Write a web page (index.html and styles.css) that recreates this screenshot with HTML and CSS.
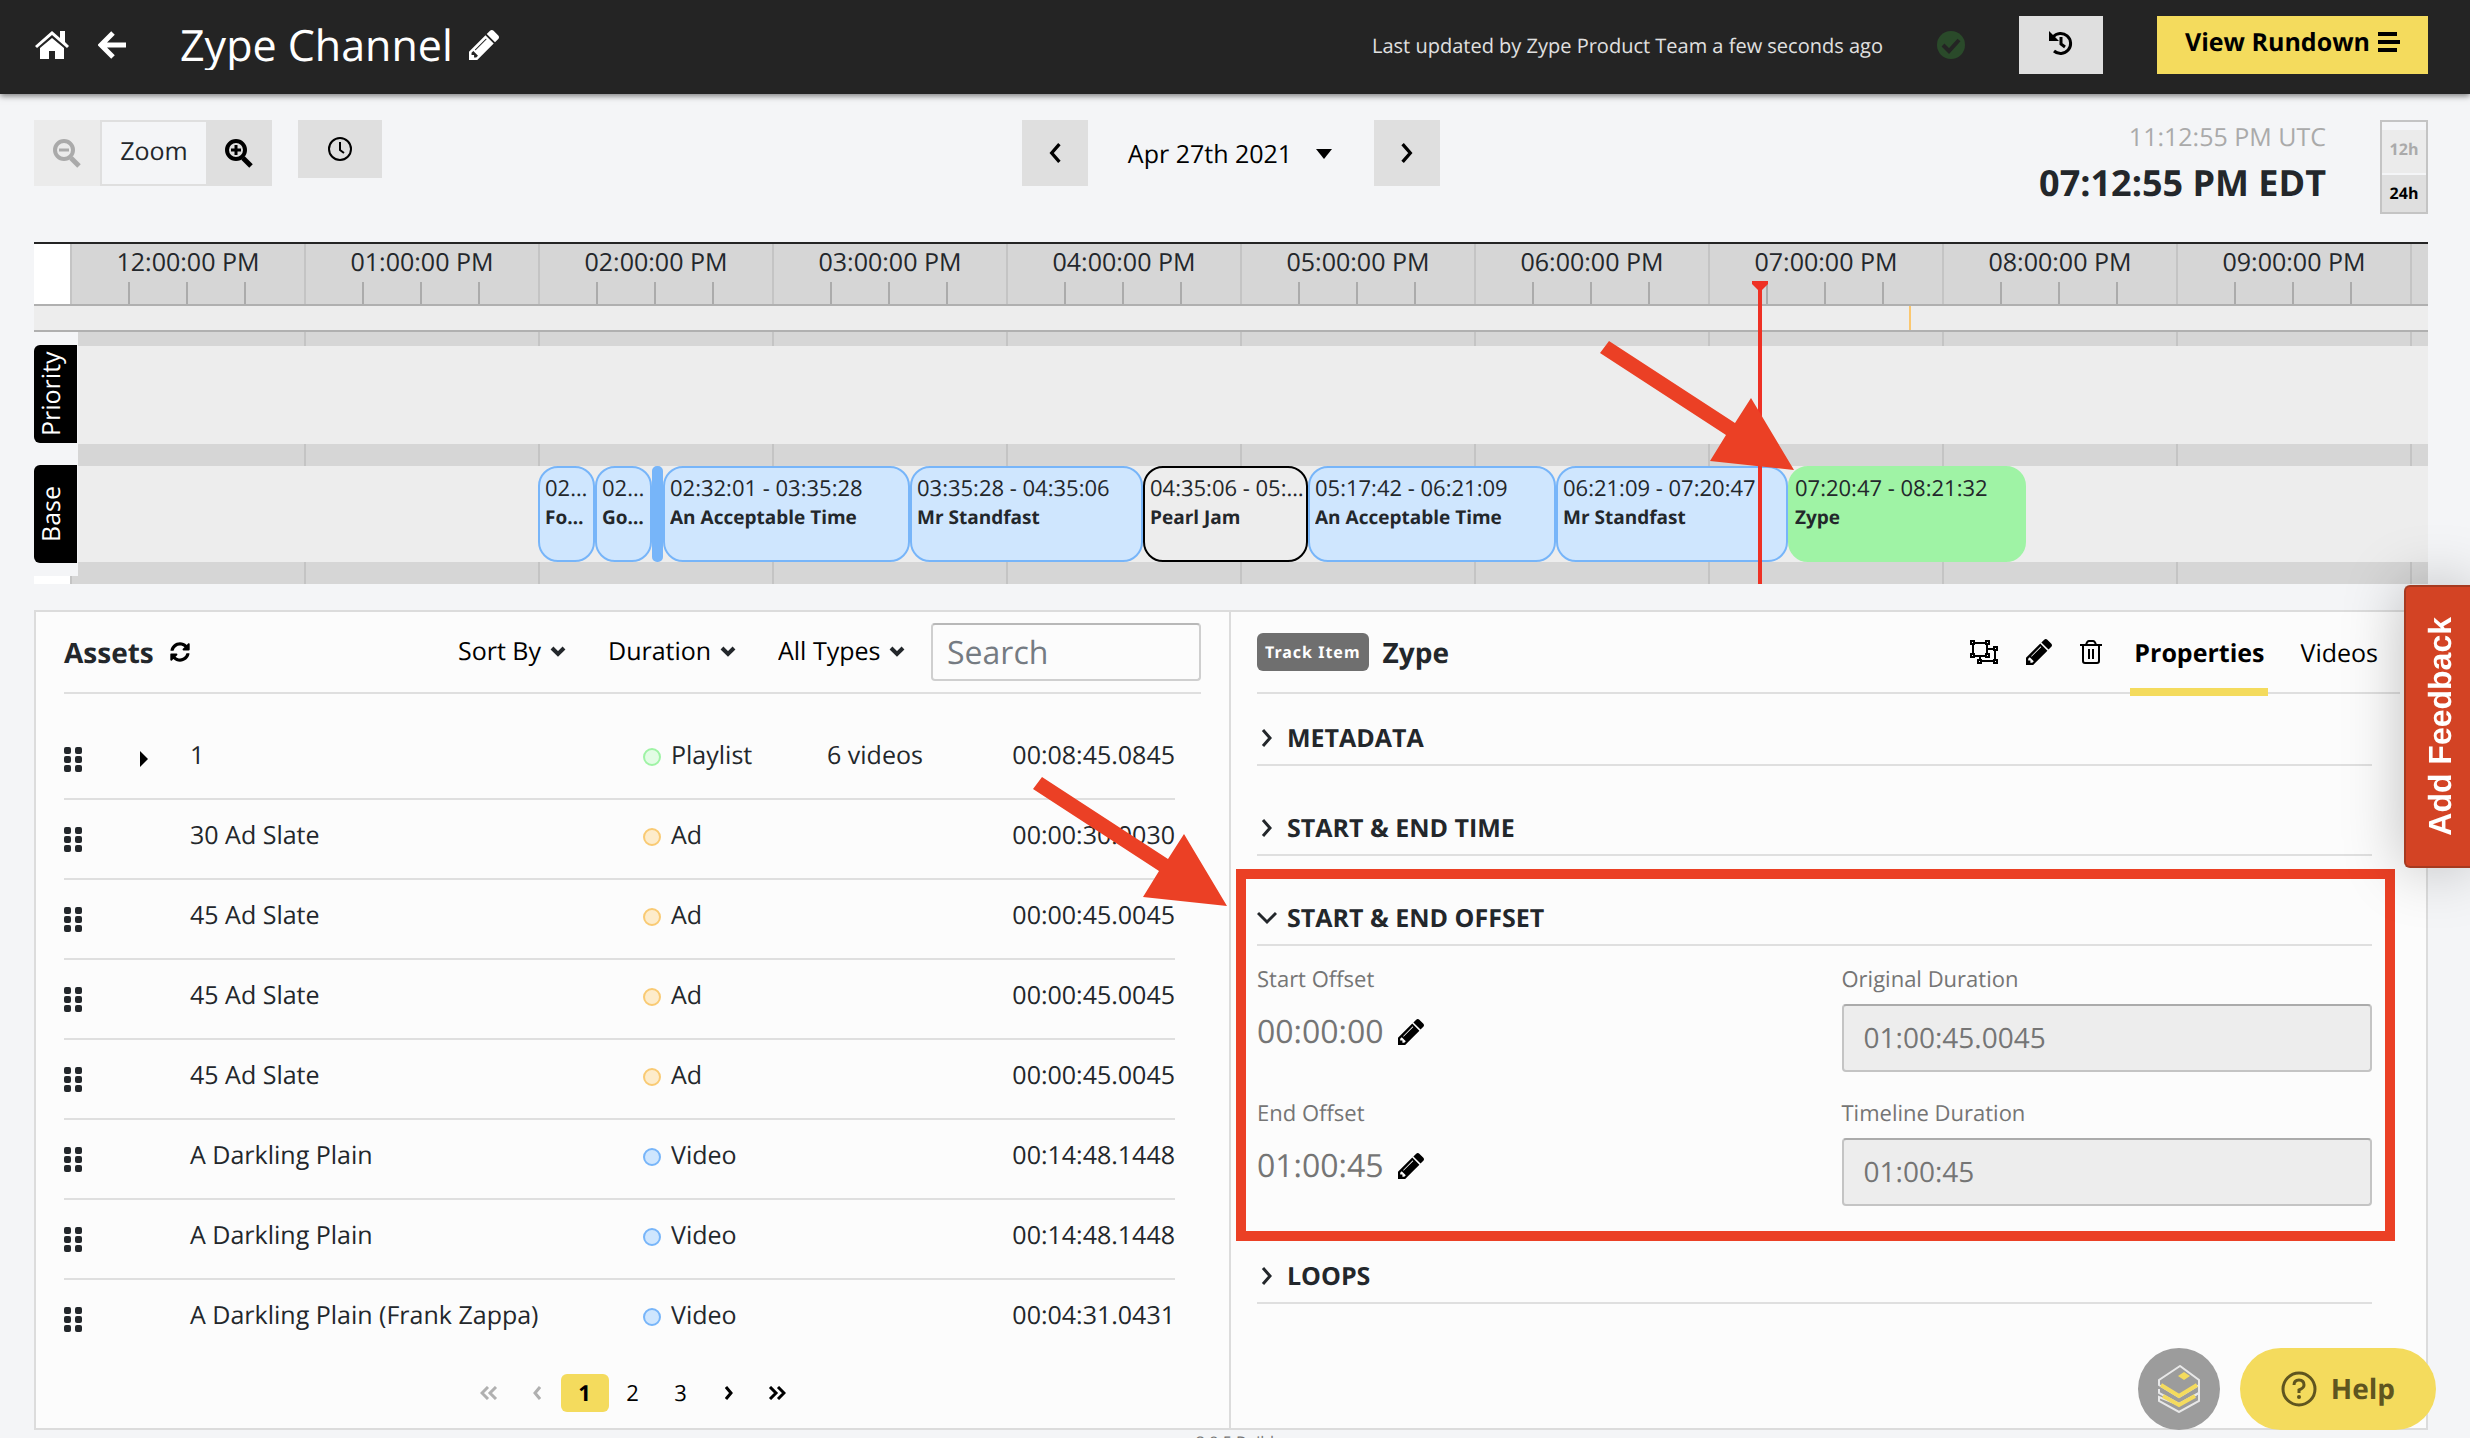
FILE: index.html
```html
<!DOCTYPE html>
<html lang="en">
<head>
  <meta charset="UTF-8">
  <meta name="viewport" content="width=device-width, initial-scale=1.0">
  <title>Zype Channel</title>
  <link rel="stylesheet" href="styles.css">
</head>
<body>

  <!-- shared icons -->
  <svg class="sprite" width="0" height="0" aria-hidden="true">
    <symbol id="pencil" viewBox="128 149 1515 1515">
      <path d="M491 1536l91-91-235-235-91 91v107h128v128h107zm523-928q0-22-22-22-10 0-17 7l-542 542q-7 7-7 17 0 22 22 22 10 0 17-7l542-542q7-7 7-17zm-54-192l416 416-832 832h-416v-416zm683 96q0 53-37 90l-166 166-416-416 166-165q36-38 90-38 53 0 91 38l235 234q37 39 37 91z"/>
    </symbol>
    <symbol id="chevron" viewBox="0 0 16 12">
      <path d="M2 3l6 6 6-6" fill="none" stroke="currentColor" stroke-width="4"/>
    </symbol>
    <symbol id="angle" viewBox="0 0 12 20">
      <path d="M2 2l7 8-7 8" fill="none" stroke="currentColor" stroke-width="3"/>
    </symbol>
    <symbol id="grip" viewBox="0 0 18 25">
      <rect x="0" y="0" width="7" height="7" rx="2"/><rect x="11" y="0" width="7" height="7" rx="2"/>
      <rect x="0" y="9" width="7" height="7" rx="2"/><rect x="11" y="9" width="7" height="7" rx="2"/>
      <rect x="0" y="18" width="7" height="7" rx="2"/><rect x="11" y="18" width="7" height="7" rx="2"/>
    </symbol>
    <symbol id="arrow" viewBox="0 0 194 130">
      <path d="M9 0L135 82L151 57L194 129L110 120L126 94L0 12Z"/>
    </symbol>
  </svg>

  <header class="topbar">
    <a class="topbar-link" href="#" aria-label="Home">
      <svg width="36" height="30" viewBox="0 0 36 30"><path d="M18 1L1 16l2 2L18 5l15 13 2-2-4-4V1h-5v7z"/><path d="M18 8L6 18v11h9v-8h6v8h9V18z"/></svg>
    </a>
    <a class="topbar-link back" href="#" aria-label="Back">
      <svg class="line" width="28" height="28" viewBox="0 0 28 28"><path d="M15 2L3 14l12 12M3 14h25" stroke-width="5"/></svg>
    </a>
    <h1 class="title">Zype Channel</h1>
    <button class="icon-btn edit-title" aria-label="Rename channel"><svg width="30" height="30"><use href="#pencil"/></svg></button>
    <p class="updated">Last updated by Zype Product Team a few seconds ago</p>
    <svg class="saved" width="28" height="28" viewBox="0 0 28 28"><circle cx="14" cy="14" r="14"/><path d="M6 14l6 6L22 9" fill="none" stroke="#242424" stroke-width="4"/></svg>
    <button class="btn history" aria-label="History">
      <svg class="line" width="24" height="26" viewBox="0 0 24 26" stroke-width="3"><path d="M4 7a10 10 0 1 1 1 14"/><path d="M12 7v7l4 3"/><path d="M0 1v10h10z" fill="currentColor" stroke="none"/></svg>
    </button>
    <button class="btn rundown">View Rundown
      <svg width="22" height="20" viewBox="0 0 22 20"><path d="M0 2h19M0 10h22M0 18h19" stroke="currentColor" stroke-width="4"/></svg>
    </button>
  </header>

  <div class="toolbar">
    <div class="toolbar-left">
      <div class="zoom">
        <button class="btn zoom-btn" disabled aria-label="Zoom out">
          <svg class="line" width="28" height="30" viewBox="0 0 28 30"><circle cx="11" cy="12" r="9" stroke-width="4"/><path d="M18 20l8 8" stroke-width="5"/><path d="M6 12h10" stroke-width="3"/></svg>
        </button>
        <span class="zoom-label">Zoom</span>
        <button class="btn zoom-btn" aria-label="Zoom in">
          <svg class="line" width="28" height="30" viewBox="0 0 28 30"><circle cx="11" cy="12" r="9" stroke-width="4"/><path d="M18 20l8 8" stroke-width="5"/><path d="M6 12h10M11 7v10" stroke-width="3"/></svg>
        </button>
      </div>
      <button class="btn now" aria-label="Go to current time">
        <svg class="line" width="24" height="24" viewBox="0 0 24 24" stroke-width="2"><circle cx="12" cy="12" r="11"/><path d="M12 5v8l4 3"/></svg>
      </button>
    </div>

    <div class="date-nav">
      <button class="btn day-btn" aria-label="Previous day"><svg class="flip" width="14" height="22"><use href="#angle"/></svg></button>
      <button class="date">Apr 27th 2021 <svg width="16" height="10" viewBox="0 0 16 10"><path d="M0 0h16L8 10z"/></svg></button>
      <button class="btn day-btn" aria-label="Next day"><svg width="14" height="22"><use href="#angle"/></svg></button>
    </div>

    <div class="toolbar-right">
      <div class="clocks">
        <div class="utc">11:12:55 PM UTC</div>
        <div class="local">07:12:55 PM EDT</div>
      </div>
      <div class="hour-format">
        <button disabled>12h</button>
        <button>24h</button>
      </div>
    </div>
  </div>

  <section class="timeline">
    <div class="ruler">
      <div class="corner"></div>
      <div class="hour"><span>12:00:00 PM</span><i></i></div>
      <div class="hour"><span>01:00:00 PM</span><i></i></div>
      <div class="hour"><span>02:00:00 PM</span><i></i></div>
      <div class="hour"><span>03:00:00 PM</span><i></i></div>
      <div class="hour"><span>04:00:00 PM</span><i></i></div>
      <div class="hour"><span>05:00:00 PM</span><i></i></div>
      <div class="hour"><span>06:00:00 PM</span><i></i></div>
      <div class="hour"><span>07:00:00 PM</span><i></i></div>
      <div class="hour"><span>08:00:00 PM</span><i></i></div>
      <div class="hour"><span>09:00:00 PM</span><i></i></div>
      <div class="hour"></div>
    </div>
    <div class="ad-bar"><span class="ad-marker" style="left: 1875px"></span></div>
    <div class="tracks">
      <div class="track-labels">
        <div class="track-label">Priority</div>
        <div class="track-label">Base</div>
      </div>
      <div class="lanes">
        <div class="lane"></div>
        <div class="lane base">
          <div class="item" style="width: 57px"><span>02:00:00 - 02:14:20</span><b>Foundation</b></div>
          <div class="item" style="width: 57px"><span>02:14:20 - 02:29:10</span><b>Good Times</b></div>
          <div class="item sliver" style="width: 11px"></div>
          <div class="item" style="width: 247px"><span>02:32:01 - 03:35:28</span><b>An Acceptable Time</b></div>
          <div class="item" style="width: 233px"><span>03:35:28 - 04:35:06</span><b>Mr Standfast</b></div>
          <div class="item outlined" style="width: 165px"><span>04:35:06 - 05:17:42</span><b>Pearl Jam</b></div>
          <div class="item" style="width: 248px"><span>05:17:42 - 06:21:09</span><b>An Acceptable Time</b></div>
          <div class="item" style="width: 232px"><span>06:21:09 - 07:20:47</span><b>Mr Standfast</b></div>
          <div class="item selected" style="width: 238px"><span>07:20:47 - 08:21:32</span><b>Zype</b></div>
        </div>
      </div>
    </div>
    <div class="playhead" style="left: 1718px"></div>
    <svg class="arrow arrow-item" width="194" height="130"><use href="#arrow"/></svg>
  </section>

  <main class="panels">
    <section class="assets">
      <div class="panel-head">
        <h2>Assets</h2>
        <button class="icon-btn refresh" aria-label="Refresh">
          <svg width="20" height="20" viewBox="0 0 512 512"><path d="M370.72 133.28C339.458 104.008 298.888 87.962 255.848 88c-77.458.068-144.328 53.178-162.791 126.85-1.344 5.363-6.122 9.15-11.651 9.15H24.103c-7.498 0-13.194-6.807-11.807-14.176C33.933 94.924 134.813 8 256 8c66.448 0 126.791 26.136 171.315 68.685L463.03 40.97C478.149 25.851 504 36.559 504 57.941V192c0 13.255-10.745 24-24 24H345.941c-21.382 0-32.09-25.851-16.971-40.971l41.75-41.749zM32 296h134.059c21.382 0 32.09 25.851 16.971 40.971l-41.75 41.75c31.262 29.273 71.835 45.319 114.876 45.28 77.418-.07 144.315-53.144 162.787-126.849 1.344-5.363 6.122-9.15 11.651-9.15h57.304c7.498 0 13.194 6.807 11.807 14.176C478.067 417.076 377.187 504 256 504c-66.448 0-126.791-26.136-171.315-68.685L48.97 471.03C33.851 486.149 8 475.441 8 454.059V320c0-13.255 10.745-24 24-24z"/></svg>
        </button>
        <div class="filters">
          <label class="filter"><select aria-label="Sort by"><option>Sort By</option></select><svg width="16" height="12"><use href="#chevron"/></svg></label>
          <label class="filter"><select aria-label="Duration"><option>Duration</option></select><svg width="16" height="12"><use href="#chevron"/></svg></label>
          <label class="filter"><select aria-label="Type"><option>All Types</option></select><svg width="16" height="12"><use href="#chevron"/></svg></label>
        </div>
        <input class="search" type="text" placeholder="Search" aria-label="Search assets">
      </div>

      <table class="asset-table">
        <colgroup><col class="c-grip"><col class="c-caret"><col><col class="c-type"><col class="c-count"><col class="c-dur"></colgroup>
        <tr><td class="ic"><svg width="18" height="25"><use href="#grip"/></svg></td><td class="ic caret"><svg width="8" height="16" viewBox="0 0 8 16"><path d="M0 0l8 8-8 8z"/></svg></td><td>1</td><td><span class="dot playlist"></span>Playlist</td><td>6 videos</td><td class="dur">00:08:45.0845</td></tr>
        <tr><td class="ic"><svg width="18" height="25"><use href="#grip"/></svg></td><td></td><td>30 Ad Slate</td><td><span class="dot ad"></span>Ad</td><td></td><td class="dur">00:00:30.0030</td></tr>
        <tr><td class="ic"><svg width="18" height="25"><use href="#grip"/></svg></td><td></td><td>45 Ad Slate</td><td><span class="dot ad"></span>Ad</td><td></td><td class="dur">00:00:45.0045</td></tr>
        <tr><td class="ic"><svg width="18" height="25"><use href="#grip"/></svg></td><td></td><td>45 Ad Slate</td><td><span class="dot ad"></span>Ad</td><td></td><td class="dur">00:00:45.0045</td></tr>
        <tr><td class="ic"><svg width="18" height="25"><use href="#grip"/></svg></td><td></td><td>45 Ad Slate</td><td><span class="dot ad"></span>Ad</td><td></td><td class="dur">00:00:45.0045</td></tr>
        <tr><td class="ic"><svg width="18" height="25"><use href="#grip"/></svg></td><td></td><td>A Darkling Plain</td><td><span class="dot video"></span>Video</td><td></td><td class="dur">00:14:48.1448</td></tr>
        <tr><td class="ic"><svg width="18" height="25"><use href="#grip"/></svg></td><td></td><td>A Darkling Plain</td><td><span class="dot video"></span>Video</td><td></td><td class="dur">00:14:48.1448</td></tr>
        <tr><td class="ic"><svg width="18" height="25"><use href="#grip"/></svg></td><td></td><td>A Darkling Plain (Frank Zappa)</td><td><span class="dot video"></span>Video</td><td></td><td class="dur">00:04:31.0431</td></tr>
      </table>

      <nav class="pagination" aria-label="Pages">
        <button disabled aria-label="First"><svg class="line" width="18" height="14" viewBox="0 0 18 14"><path d="M8 1L2 7l6 6M16 1l-6 6 6 6"/></svg></button>
        <button disabled aria-label="Previous"><svg class="line" width="8" height="14" viewBox="0 0 8 14"><path d="M7 1L2 7l5 6"/></svg></button>
        <button class="active">1</button>
        <button>2</button>
        <button>3</button>
        <button aria-label="Next"><svg class="line" width="8" height="14" viewBox="0 0 8 14"><path d="M1 1l5 6-5 6"/></svg></button>
        <button aria-label="Last"><svg class="line" width="18" height="14" viewBox="0 0 18 14"><path d="M2 1l6 6-6 6M10 1l6 6-6 6"/></svg></button>
      </nav>
    </section>

    <section class="details">
      <div class="panel-head">
        <span class="badge">Track Item</span>
        <h2>Zype</h2>
        <div class="tools">
          <button class="icon-btn" aria-label="Group"><svg class="line" width="28" height="24" viewBox="0 0 28 24" stroke-width="2"><path d="M3 3h14v13H3zM18 9h7v12H10v-4"/><g fill="#fcfcfc"><path d="M1 1h3v3H1zM16 1h3v3h-3zM1 14h3v3H1zM16 14h3v3h-3zM24 7h3v3h-3zM8 20h3v3H8zM24 20h3v3h-3z"/></g></svg></button>
          <button class="icon-btn" aria-label="Edit"><svg width="26" height="26"><use href="#pencil"/></svg></button>
          <button class="icon-btn" aria-label="Delete"><svg class="line" width="22" height="24" viewBox="0 0 22 24" stroke-width="2"><path d="M0 5h22M3 5v16q0 2 2 2h12q2 0 2-2V5M6 5q1-4 3-4h4q2 0 3 4M9 9v10M13 9v10"/></svg></button>
          <button class="tab active">Properties</button>
          <button class="tab">Videos</button>
        </div>
      </div>

      <div class="group"><h3><svg width="18" height="20"><use href="#angle"/></svg>METADATA</h3></div>
      <div class="group"><h3><svg width="18" height="20"><use href="#angle"/></svg>START &amp; END TIME</h3></div>
      <div class="group">
        <h3><svg class="line" width="20" height="14" viewBox="0 0 20 14"><path d="M1 2l9 9 9-9" stroke-width="3"/></svg>START &amp; END OFFSET</h3>
        <div class="fields">
          <div class="field">
            <div class="label">Start Offset</div>
            <div class="value">00:00:00 <button class="icon-btn" aria-label="Edit start offset"><svg width="26" height="26"><use href="#pencil"/></svg></button></div>
          </div>
          <div class="field">
            <label class="label" for="original">Original Duration</label>
            <input type="text" id="original" value="01:00:45.0045" disabled>
          </div>
          <div class="field">
            <div class="label">End Offset</div>
            <div class="value">01:00:45 <button class="icon-btn" aria-label="Edit end offset"><svg width="26" height="26"><use href="#pencil"/></svg></button></div>
          </div>
          <div class="field">
            <label class="label" for="timeline">Timeline Duration</label>
            <input type="text" id="timeline" value="01:00:45" disabled>
          </div>
        </div>
        <div class="frame"></div>
        <svg class="arrow arrow-frame" width="194" height="130"><use href="#arrow"/></svg>
      </div>
      <div class="group"><h3><svg width="18" height="20"><use href="#angle"/></svg>LOOPS</h3></div>
    </section>
  </main>

  <footer class="footer">2.0.5 Build</footer>

  <button class="feedback">Add Feedback</button>
  <div class="floating">
    <button class="guide" aria-label="Guide">
      <svg class="line" width="42" height="48" viewBox="0 0 42 48" stroke-width="2">
        <path d="M1 32v4l20 11 20-11v-8L21 40z"/>
        <path d="M1 24v4l20 11 20-11v-8"/>
        <path d="M22 1L1 15v5l20 12 20-12v-5z"/>
        <path d="M3 20l18 11 18-11M5 31l16 9 16-9" stroke="#f4db5d" stroke-width="4"/>
        <path d="M20 11l6-4 6 4-6 4z" fill="#f4db5d" stroke="none"/>
      </svg>
    </button>
    <button class="help">
      <svg width="36" height="36" viewBox="0 0 36 36"><circle cx="18" cy="18" r="16" fill="none" stroke="currentColor" stroke-width="3"/><path d="M13 14q0-5 5-5t5 5q0 3-5 5v3" fill="none" stroke="currentColor" stroke-width="3"/><circle cx="18" cy="26" r="2"/></svg>
      Help
    </button>
  </div>

</body>
</html>
```
FILE: styles.css
```css
* {
  box-sizing: border-box;
}

body {
  font-family: "Open Sans", "Noto Sans", sans-serif;
  margin: 0;
  background-color: #f4f5f7;
  color: #23272b;
  font-size: 25px;
  min-height: 100vh;
  text-rendering: geometricPrecision;
}

h1, h2, h3, p {
  margin: 0;
}

button, input, select {
  font-family: inherit;
  font-size: inherit;
  color: #000;
  text-rendering: inherit;
}

button {
  border: none;
  padding: 0;
  background: none;
  cursor: pointer;
}

svg {
  display: block;
  fill: currentColor;
  flex-shrink: 0;
}

.line {
  fill: none;
  stroke: currentColor;
}

.sprite {
  position: absolute;
}

.icon-btn {
  display: flex;
  align-items: center;
}

.btn {
  display: flex;
  align-items: center;
  justify-content: center;
  background-color: #dfdfdf;
}

/* top bar */
.topbar {
  display: flex;
  align-items: center;
  padding: 16px 42px 20px 34px;
  background-color: #242424;
  color: #fff;
  box-shadow: 0 2px 6px rgba(0, 0, 0, 0.5);
}

.topbar-link {
  color: #fff;
}

.back {
  margin: 0 54px 0 28px;
}

.title {
  font-size: 43px;
  font-weight: 400;
  line-height: 50px;
  overflow: hidden;
}

.edit-title {
  margin-left: 16px;
  color: #fff;
}

.updated {
  margin-left: auto;
  font-size: 20px;
  color: #e0e0e0;
}

.saved {
  margin: 0 54px;
  color: #2a4a2a;
}

.history,
.rundown {
  height: 58px;
  padding-bottom: 4px;
}

.history {
  width: 84px;
  margin-right: 54px;
}

.rundown {
  gap: 8px;
  padding: 0 28px 6px;
  background-color: #f4db5d;
  font-weight: 700;
}

/* toolbar */
.toolbar {
  display: grid;
  grid-template-columns: 1fr auto 1fr;
  padding: 26px 42px 28px 34px;
}

.toolbar-left,
.date-nav,
.toolbar-right,
.zoom {
  display: flex;
  align-items: flex-start;
}

.toolbar-left {
  gap: 26px;
}

.zoom-btn,
.day-btn {
  width: 66px;
  height: 66px;
}

.btn:disabled {
  background-color: #ebebeb;
  color: #aaa;
}

.zoom-label {
  width: 106px;
  height: 66px;
  border: 2px solid #dfdfdf;
  border-right: none;
  line-height: 58px;
  text-align: center;
}

.now {
  width: 84px;
  height: 58px;
}

.flip {
  transform: scaleX(-1);
}

.date {
  display: flex;
  align-items: center;
  gap: 24px;
  height: 66px;
  padding: 2px 42px 0 40px;
}

.toolbar-right {
  justify-content: flex-end;
  gap: 54px;
}

.clocks {
  text-align: right;
}

.utc {
  line-height: 34px;
  color: #aaa;
}

.local {
  font-size: 36px;
  font-weight: 700;
  line-height: 58px;
}

.hour-format {
  display: flex;
  flex-direction: column;
  gap: 2px;
  width: 48px;
  height: 94px;
  padding-top: 8px;
  border: 2px solid #c4c4c4;
}

.hour-format button {
  flex: 1;
  background-color: #dfdfdf;
  font-size: 16px;
  font-weight: 700;
}

.hour-format button:disabled {
  padding-bottom: 5px;
  background-color: #ebebeb;
  color: #aaa;
}

/* timeline */
.timeline {
  position: relative;
  margin: 0 42px 0 34px;
  border-top: 2px solid #242424;
  background-color: #d6d6d6;
  overflow: hidden;
}

.ruler {
  display: flex;
  height: 62px;
  border-bottom: 2px solid #b0b0b0;
}

.corner {
  flex: 0 0 36px;
  background-color: #fff;
}

.hour {
  flex: 0 0 234px;
  display: flex;
  flex-direction: column;
  justify-content: space-between;
  border-left: 2px solid #c4c4c4;
}

.hour span {
  line-height: 37px;
  text-align: center;
}

.hour i {
  width: 118px;
  height: 22px;
  margin-left: 56px;
  background: repeating-linear-gradient(90deg, #ababab 0 2px, transparent 2px 58px);
}

.ad-bar {
  position: relative;
  height: 26px;
  background-color: #ededed;
  border-bottom: 2px solid #b0b0b0;
}

.ad-marker {
  position: absolute;
  top: 0;
  width: 2px;
  height: 24px;
  background-color: #fbc76f;
}

.tracks {
  display: flex;
  align-items: flex-start;
  background: linear-gradient(#fff, #fff) 0 100% / 36px 8px no-repeat,
    repeating-linear-gradient(90deg, #c4c4c4 0 2px, transparent 2px 234px) 36px 0;
}

.track-labels {
  display: flex;
  flex-direction: column;
  gap: 22px;
  width: 44px;
  padding: 13px 0;
  background-color: #f4f5f7;
}

.track-label {
  height: 98px;
  width: 43px;
  border-radius: 0 6px 6px 0;
  background-color: #000;
  color: #fff;
  line-height: 34px;
  text-align: center;
  writing-mode: vertical-rl;
  transform: rotate(180deg);
}

.lanes {
  flex: 1;
  min-width: 0;
  padding: 14px 0 22px;
}

.lane {
  height: 98px;
  background-color: #ededed;
}

.base {
  display: flex;
  height: 96px;
  margin-top: 22px;
  padding-left: 460px;
}

.item {
  flex-shrink: 0;
  padding: 6px 2px 0 5px;
  border: 2px solid #77b5f9;
  border-radius: 20px;
  background-color: #cfe6fe;
}

.item span,
.item b {
  display: block;
  line-height: 29px;
  white-space: nowrap;
  overflow: hidden;
  text-overflow: ellipsis;
}

.item span {
  font-size: 22px;
}

.item b {
  font-size: 19px;
}

.sliver {
  padding: 0;
  border-radius: 5px;
  background-color: #77b5f9;
}

.outlined {
  border-color: #000;
  background-color: #ededed;
}

.selected {
  border-color: #9ff3a5;
  background-color: #9ff3a5;
}

.playhead {
  position: absolute;
  top: 37px;
  bottom: 0;
  width: 16px;
  background: linear-gradient(#ee3124, #ee3124) 50% 0 / 4px 100% no-repeat;
}

.playhead::before {
  content: "";
  display: block;
  height: 11px;
  background-color: #ee3124;
  clip-path: polygon(0 0, 100% 0, 100% 3px, 50% 100%, 0 3px);
}

.arrow {
  position: absolute;
  color: #eb4025;
}

.arrow-item {
  left: 1566px;
  top: 97px;
}

/* panels */
.panels {
  display: grid;
  grid-template-columns: 1fr 1fr;
  margin: 26px 42px 0 34px;
  border: 2px solid #dcdcdc;
  background-color: #fcfcfc;
}

.assets {
  padding: 0 28px 16px;
  border-right: 2px solid #dcdcdc;
}

.details {
  padding: 0 26px;
}

.panel-head {
  display: flex;
  align-items: center;
  height: 82px;
  border-bottom: 2px solid #dfdfdf;
}

h2 {
  padding-top: 2px;
  font-size: 28px;
  font-weight: 700;
}

.refresh {
  margin-left: 16px;
}

.filters {
  display: flex;
  gap: 42px;
  margin: 0 26px 0 auto;
}

.filter {
  display: flex;
  align-items: center;
  gap: 8px;
  padding-bottom: 3px;
}

.filter select {
  appearance: none;
  padding: 0;
  border: none;
  background: none;
}

.search {
  width: 270px;
  height: 58px;
  padding: 0 14px;
  border: 2px solid #cfcfcf;
  border-top-color: #b8b8b8;
  border-radius: 4px;
  background-color: #fcfcfc;
  font-size: 32px;
}

.search::placeholder {
  color: #757b82;
}

.asset-table {
  table-layout: fixed;
  width: calc(100% - 26px);
  margin-top: 26px;
  border-collapse: separate;
  border-spacing: 0;
}

.c-grip { width: 76px; }
.c-caret { width: 50px; }
.c-type { width: 184px; }
.c-count { width: 170px; }
.c-dur { width: 178px; }

.asset-table td {
  height: 80px;
  padding: 0 0 8px;
  border-bottom: 2px solid #dfdfdf;
  white-space: nowrap;
}

.asset-table tr:last-child td {
  border-bottom-color: transparent;
}

.asset-table .ic {
  padding: 0;
}

.caret {
  color: #000;
}

.dur {
  text-align: right;
}

.dot {
  display: inline-block;
  width: 18px;
  height: 18px;
  margin-right: 10px;
  border: 2px solid;
  border-radius: 50%;
  vertical-align: middle;
}

.playlist {
  border-color: #9ff3a5;
  background-color: #e3fce5;
}

.ad {
  border-color: #f9ca73;
  background-color: #fdeccb;
}

.video {
  border-color: #77b5f9;
  background-color: #cfe6fe;
}

.pagination {
  display: flex;
  justify-content: center;
  margin-top: 14px;
}

.pagination button {
  display: flex;
  align-items: center;
  justify-content: center;
  width: 48px;
  height: 38px;
  border-radius: 6px;
  font-size: 22px;
}

.pagination svg {
  stroke-width: 3;
}

.pagination button:disabled {
  color: #b0b0b0;
}

.pagination .active {
  background-color: #f4db5d;
  font-weight: 700;
}

/* details */
.badge {
  margin-right: 14px;
  padding: 0 8px;
  border-radius: 6px;
  background-color: #6f6f6f;
  color: #fff;
  font-family: "Noto Sans", sans-serif;
  font-size: 16px;
  font-weight: 700;
  letter-spacing: 1px;
  line-height: 38px;
}

.tools {
  display: flex;
  align-items: center;
  gap: 28px;
  height: 100%;
  margin: 0 18px 0 auto;
}

.tab {
  position: relative;
  height: 80px;
  padding: 2px 4px 0;
}

.tab.active {
  font-weight: 700;
}

.tab.active::after {
  content: "";
  position: absolute;
  left: 0;
  right: 0;
  bottom: -4px;
  height: 8px;
  background-color: #f4db5d;
}

.group {
  position: relative;
  margin: 44px 28px 0 0;
}

.panel-head + .group {
  margin-top: 26px;
}

h3 {
  display: flex;
  align-items: center;
  gap: 10px;
  padding-bottom: 8px;
  border-bottom: 2px solid #dfdfdf;
  font-size: 25px;
  font-weight: 700;
  line-height: 36px;
}

h3 svg {
  width: 20px;
}

.fields {
  display: grid;
  grid-template-columns: 1fr 1fr;
  gap: 26px 54px;
  padding: 18px 0 8px;
}

.label {
  display: block;
  margin-bottom: 10px;
  color: #757575;
  font-size: 22px;
  line-height: 30px;
}

.value {
  display: flex;
  align-items: center;
  gap: 14px;
  color: #757575;
  font-size: 32px;
  line-height: 56px;
}

.field input {
  display: block;
  width: 100%;
  height: 68px;
  padding: 0 20px;
  border: 2px solid #c4c4c4;
  border-top-color: #ababab;
  border-radius: 4px;
  background-color: #ededed;
  color: #757575;
  font-size: 28px;
}

.frame {
  position: absolute;
  inset: -31px -23px -27px -21px;
  border: 10px solid #eb4025;
}

.arrow-frame {
  left: -224px;
  top: -123px;
}

.footer {
  color: #757575;
  font-size: 16px;
  line-height: 24px;
  text-align: center;
}

.feedback {
  position: fixed;
  top: 585px;
  right: 0;
  width: 66px;
  height: 283px;
  padding-left: 4px;
  border: 2px solid #a63a20;
  border-width: 2px 0 2px 2px;
  border-radius: 6px 0 0 6px;
  background-color: #d34324;
  box-shadow: 0 0 60px rgba(0, 0, 0, 0.25);
  color: #fff;
  font-family: "Liberation Sans", Arial, sans-serif;
  font-size: 32px;
  font-weight: 700;
  writing-mode: sideways-lr;
}

.floating {
  position: fixed;
  right: 34px;
  bottom: 8px;
  display: flex;
  gap: 20px;
}

.guide {
  display: flex;
  align-items: center;
  justify-content: center;
  width: 82px;
  height: 82px;
  border-radius: 50%;
  background-color: #9c9c9c;
  color: #e8e8e8;
}

.help {
  display: flex;
  align-items: center;
  gap: 14px;
  height: 82px;
  padding: 0 41px;
  border-radius: 41px;
  background-color: #f4db5d;
  color: #5f551f;
  font-size: 28px;
  font-weight: 700;
}
```
